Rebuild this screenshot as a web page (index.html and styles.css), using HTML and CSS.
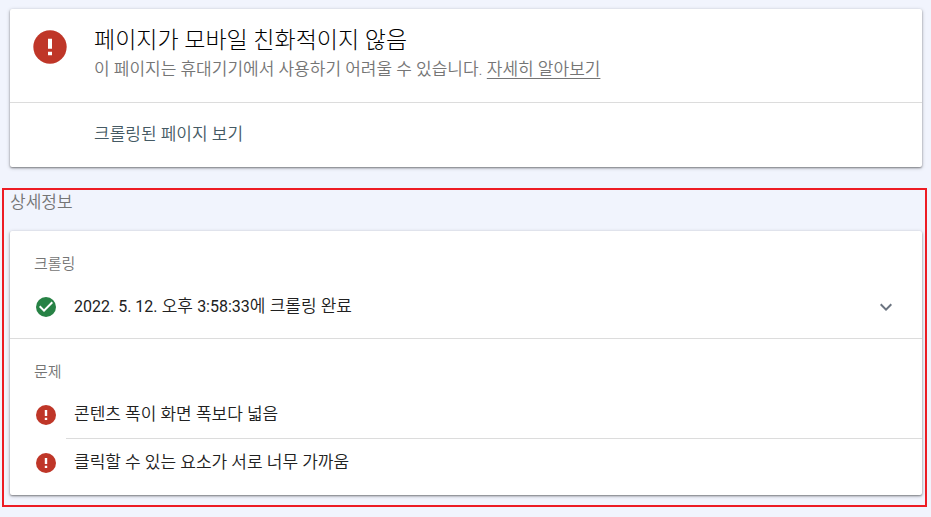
FILE: index.html
```
<!DOCTYPE html>
<html lang="ko">
<head>
    <meta charset="UTF-8">
    <meta name="viewport" content="width=device-width, initial-scale=1.0">
    <title>모바일 친화성 테스트</title>
    <link rel="stylesheet" href="styles.css">
</head>
<body>
    <!-- 아이콘 -->
    <svg class="sprite" aria-hidden="true">
        <symbol id="icon-error" viewBox="0 0 24 24">
            <circle cx="12" cy="12" r="10" fill="#bf3628"/>
            <path d="M10.8 7h2.4v6h-2.4zM10.8 14.8h2.4v2.2h-2.4z" fill="#fff"/>
        </symbol>
        <symbol id="icon-done" viewBox="0 0 24 24">
            <circle cx="12" cy="12" r="10" fill="#278245"/>
            <path d="M10 17l-5-5 1.4-1.4 3.6 3.6 7.6-7.6L19 8z" fill="#fff"/>
        </symbol>
        <symbol id="icon-expand" viewBox="0 0 24 24">
            <path d="M16.6 8.6L12 13.2 7.4 8.6 6 10l6 6 6-6z" fill="#6b7480"/>
        </symbol>
    </svg>

    <main>
        <div class="card summary">
            <div class="summary-header">
                <svg class="icon-large"><use href="#icon-error"/></svg>
                <div>
                    <h1>페이지가 모바일 친화적이지 않음</h1>
                    <p>이 페이지는 휴대기기에서 사용하기 어려울 수 있습니다. <a href="#">자세히 알아보기</a></p>
                </div>
            </div>
            <div class="summary-footer">
                <button type="button">크롤링된 페이지 보기</button>
            </div>
        </div>

        <section class="details">
            <h2>상세정보</h2>
            <div class="card">
                <div class="group">
                    <h3>크롤링</h3>
                    <button type="button" class="row" aria-expanded="false">
                        <svg class="icon"><use href="#icon-done"/></svg>
                        <span class="row-text"><span class="number">2022. 5. 12.</span> 오후 <span class="number">3:58:33</span>에 크롤링 완료</span>
                        <svg class="icon-expand"><use href="#icon-expand"/></svg>
                    </button>
                </div>
                <div class="group">
                    <h3>문제</h3>
                    <button type="button" class="row">
                        <svg class="icon"><use href="#icon-error"/></svg>
                        <span class="row-text">콘텐츠 폭이 화면 폭보다 넓음</span>
                    </button>
                    <button type="button" class="row">
                        <svg class="icon"><use href="#icon-error"/></svg>
                        <span class="row-text">클릭할 수 있는 요소가 서로 너무 가까움</span>
                    </button>
                </div>
            </div>
        </section>
    </main>
</body>
</html>
```

FILE: styles.css
```
* {
    box-sizing: border-box;
}
body {
    margin: 0;
    padding: 9px 4px 10px 2px;
    background: #f1f4fd;
    color: #212121;
    font-family: Roboto, "Noto Sans CJK KR", sans-serif;
    font-size: 17px;
    font-weight: 350;
}
h1, h2, h3, p {
    margin: 0;
    font-weight: inherit;
}
button {
    padding: 0;
    border: 0;
    background: none;
    color: inherit;
    font: inherit;
    text-align: left;
    cursor: pointer;
}
svg {
    flex: none;
}
.sprite {
    position: absolute;
    width: 0;
    height: 0;
}
.card {
    background: #fff;
    border-radius: 2px;
    box-shadow: 0 1px 2px rgba(0, 0, 0, 0.4), 0 1px 4px rgba(0, 0, 0, 0.2);
}

/* 결과 요약 */
.summary {
    margin: 0 5px 0 8px;
}
.summary-header {
    display: flex;
    gap: 24px;
    padding: 18px 24px 19px 20px;
    border-bottom: 1px solid #dcdcdc;
}
.icon-large {
    width: 40px;
    height: 40px;
}
h1 {
    color: #000;
    font-size: 23px;
    font-weight: 300;
    line-height: 28px;
}
.summary-header p {
    color: #757575;
    line-height: 28px;
}
.summary-header a {
    color: inherit;
    text-underline-offset: 3px;
}
.summary-footer {
    padding: 19px 24px 21px 84px;
    color: #455a64;
}
.summary-footer button {
    display: block;
    line-height: 24px;
}

/* 상세정보 */
.details {
    margin-top: 21px;
    padding: 0 3px 10px 6px;
    border: 2px solid #ed1c24;
}
h2 {
    padding-bottom: 17px;
    color: #757575;
    font-size: 17px;
    line-height: 24px;
    box-sizing: content-box;
}
h3 {
    margin: 0 24px 7px;
    color: #757575;
    font-size: 15px;
    line-height: 24px;
}
.group {
    padding: 21px 0 8px;
}
.group:first-child {
    padding-bottom: 7px;
    border-bottom: 1px solid #dcdcdc;
}
.row {
    display: flex;
    align-items: center;
    width: 100%;
    height: 48px;
    padding-left: 24px;
}
.icon {
    width: 24px;
    height: 24px;
    margin-right: 8px;
}
.row-text {
    flex: 1;
    padding-left: 8px;
    color: #212121;
    line-height: 47px;
    border-bottom: 1px solid #dcdcdc;
}
.row:last-child .row-text {
    border-color: transparent;
}
.number {
    font-size: 16px;
    font-weight: 400;
}
.icon-expand {
    width: 24px;
    height: 24px;
    margin-right: 24px;
}
```
